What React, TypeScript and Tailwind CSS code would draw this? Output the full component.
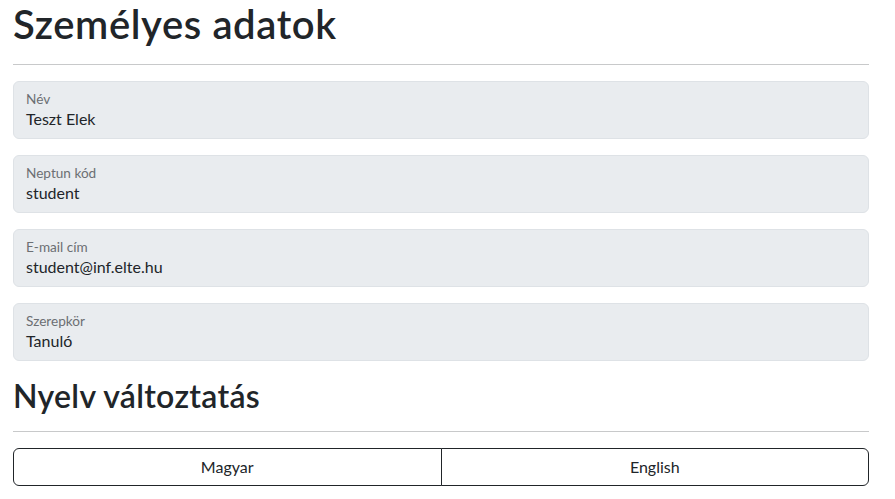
import React from 'react'

const fields = [
  { label: 'Név', value: 'Teszt Elek' },
  { label: 'Neptun kód', value: 'student' },
  { label: 'E-mail cím', value: 'student@inf.elte.hu' },
  { label: 'Szerepkör', value: 'Tanuló' },
]

function ReadonlyField({ label, value }: { label: string; value: string }) {
  return (
    <div className="mb-4 flex h-[58px] flex-col rounded-[6px] border border-[#dee2e6] bg-[#e9ecef] px-3 pt-[9px]">
      <div className="h-4 text-[13.6px] leading-4 text-[#6c6f73]">{label}</div>
      <div className="h-6 text-base leading-6 text-[#212529]">{value}</div>
    </div>
  )
}

export default function App() {
  return (
    <div className="min-h-screen bg-white font-['Lato',sans-serif] text-[#212529]">
      <div className="ml-[13px] w-[856px]">
        <h1 className="h-12 text-[40px] font-semibold leading-[48px] tracking-[0.6px]">Személyes adatok</h1>
        <hr className="mb-4 mt-4 border-t border-[#c8c9ca]" />

        {fields.map((f) => (
          <ReadonlyField key={f.label} label={f.label} value={f.value} />
        ))}

        <h2 className="h-[38px] text-[32px] font-semibold leading-[38px] tracking-[0.3px]">Nyelv változtatás</h2>
        <hr className="mb-4 mt-4 border-t border-[#c8c9ca]" />

        <div className="flex" role="group">
          <button className="h-[38px] flex-1 rounded-l-[6px] border border-[#212529] bg-white text-base text-[#212529]">Magyar</button>
          <button className="-ml-px h-[38px] flex-1 rounded-r-[6px] border border-[#212529] bg-white text-base text-[#212529]">English</button>
        </div>
      </div>
    </div>
  )
}
